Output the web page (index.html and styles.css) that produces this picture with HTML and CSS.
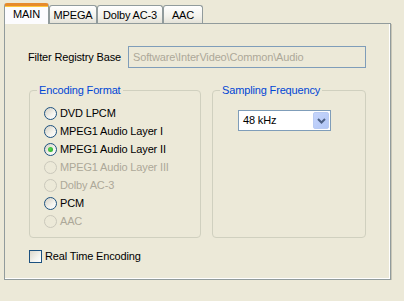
FILE: index.html
```html
<!DOCTYPE html>
<html>
<head>
<meta charset="utf-8">
<link rel="stylesheet" href="styles.css">
</head>
<body>
<div class="window">
  <div class="tabs">
    <div class="tab tab-main active">MAIN</div>
    <div class="tab tab-mpega">MPEGA</div>
    <div class="tab tab-dolby">Dolby AC-3</div>
    <div class="tab tab-aac">AAC</div>
  </div>
  <div class="panel">
    <div class="field-row">
      <span class="field-label">Filter Registry Base</span>
      <div class="textbox">Software\InterVideo\Common\Audio</div>
    </div>
    <div class="groups">
      <fieldset class="group group-enc">
        <legend>Encoding Format</legend>
        <div class="radio-list">
          <div class="radio"><span class="radio-dot"></span>DVD LPCM</div>
          <div class="radio"><span class="radio-dot"></span>MPEG1 Audio Layer I</div>
          <div class="radio checked"><span class="radio-dot"></span>MPEG1 Audio Layer II</div>
          <div class="radio disabled"><span class="radio-dot"></span>MPEG1 Audio Layer III</div>
          <div class="radio disabled"><span class="radio-dot"></span>Dolby AC-3</div>
          <div class="radio"><span class="radio-dot"></span>PCM</div>
          <div class="radio disabled"><span class="radio-dot"></span>AAC</div>
        </div>
      </fieldset>
      <fieldset class="group group-freq">
        <legend>Sampling Frequency</legend>
        <div class="combo">
          <span class="combo-value">48 kHz</span>
          <span class="combo-btn">
            <svg width="9" height="6" viewBox="0 0 9 6"><path d="M1 1 L4.5 4.5 L8 1" fill="none" stroke="#4D6185" stroke-width="2"/></svg>
          </span>
        </div>
      </fieldset>
    </div>
    <div class="check"><span class="check-box"></span>Real Time Encoding</div>
  </div>
</div>
</body>
</html>
```

FILE: styles.css
```css
html, body {
  margin: 0;
  padding: 0;
  background: #ECE9D8;
}
body {
  font-family: "Liberation Sans", Arial, sans-serif;
  font-size: 11px;
  color: #000;
  letter-spacing: -0.15px;
}
.window {
  padding: 3px 0 0 4px;
}
.tabs {
  display: flex;
  align-items: flex-end;
  height: 20px;
  position: relative;
  z-index: 2;
}
.tab {
  box-sizing: border-box;
  height: 18px;
  border: 1px solid #919B9C;
  border-bottom: none;
  border-radius: 3px 3px 0 0;
  background: linear-gradient(#FFFFFF, #F3F2EC 60%, #E4E2D8);
  text-align: center;
  padding-top: 3px;
  line-height: 13px;
}
.tab.active {
  height: 21px;
  margin-bottom: -1px;
  background: #FCFCFE;
  border-top: 3px solid #FFC83C;
  box-shadow: inset 0 1px 0 #FFC83C;
  border-top-color: #E68B2C;
  padding-top: 2px;
  border-top-left-radius: 3px;
  border-top-right-radius: 3px;
}
.tab-main { width: 45px; }
.tab-mpega { width: 48px; }
.tab-dolby { width: 66px; }
.tab-aac { width: 40px; }

.panel {
  box-sizing: border-box;
  width: 387px;
  height: 257px;
  border: 1px solid #919B9C;
  box-shadow: inset -1px -1px 0 #FFFFFF, 1px 1px 0 #C9C6B6;
  padding: 22px 0 0 23px;
  position: relative;
  z-index: 1;
}
.field-row {
  display: flex;
  align-items: center;
  height: 22px;
}
.field-label {
  width: 100px;
}
.textbox {
  box-sizing: border-box;
  width: 238px;
  height: 22px;
  border: 1px solid #7F9DB9;
  color: #ACA899;
  line-height: 20px;
  padding-left: 4px;
  white-space: nowrap;
  overflow: hidden;
}
.groups {
  display: flex;
  gap: 11px;
  margin-top: 16px;
  margin-left: 1px;
}
.group {
  box-sizing: border-box;
  margin: 0;
  padding: 0 0 7px 7px;
  border: 1px solid #D0D0BF;
  border-radius: 4px;
  min-width: 0;
}
.group legend {
  color: #0046D5;
  padding: 0 2px;
  line-height: 13px;
}
.group-enc { width: 172px; }
.group-freq { width: 154px; }

.radio-list {
  padding-top: 7px;
  padding-left: 7px;
}
.radio {
  display: flex;
  align-items: center;
  height: 18px;
  white-space: nowrap;
}
.radio-dot {
  box-sizing: border-box;
  width: 13px;
  height: 13px;
  border-radius: 50%;
  border: 1px solid #1C5180;
  background: linear-gradient(135deg, #D4D0C3, #F4F3EE 60%, #FFFFFF);
  margin-right: 3px;
  flex: none;
  display: flex;
  align-items: center;
  justify-content: center;
}
.radio.checked .radio-dot::after {
  content: "";
  width: 5px;
  height: 5px;
  border-radius: 50%;
  background: radial-gradient(circle at 40% 40%, #55D755, #21A121);
}
.radio.disabled {
  color: #ACA899;
}
.radio.disabled .radio-dot {
  border-color: #CAC8BB;
  background: #ECE9D8;
}

.combo {
  box-sizing: border-box;
  display: flex;
  align-items: center;
  width: 93px;
  height: 21px;
  border: 1px solid #7F9DB9;
  background: #FFFFFF;
  margin-top: 13px;
  margin-left: 18px;
  padding: 1px;
}
.combo-value {
  flex: 1;
  padding-left: 3px;
  line-height: 17px;
}
.combo-btn {
  box-sizing: border-box;
  width: 16px;
  height: 17px;
  border: 1px solid #B9CBF3;
  border-radius: 2px;
  background: linear-gradient(135deg, #C6D5FC, #B2C7F6);
  display: flex;
  align-items: center;
  justify-content: center;
}

.check {
  display: flex;
  align-items: center;
  height: 14px;
  margin-top: 11px;
  margin-left: 1px;
}
.check-box {
  box-sizing: border-box;
  width: 13px;
  height: 13px;
  border: 1px solid #1C5180;
  background: linear-gradient(135deg, #DCD7CB, #F4F3EE 60%, #FFFFFF);
  margin-right: 3px;
}
```
